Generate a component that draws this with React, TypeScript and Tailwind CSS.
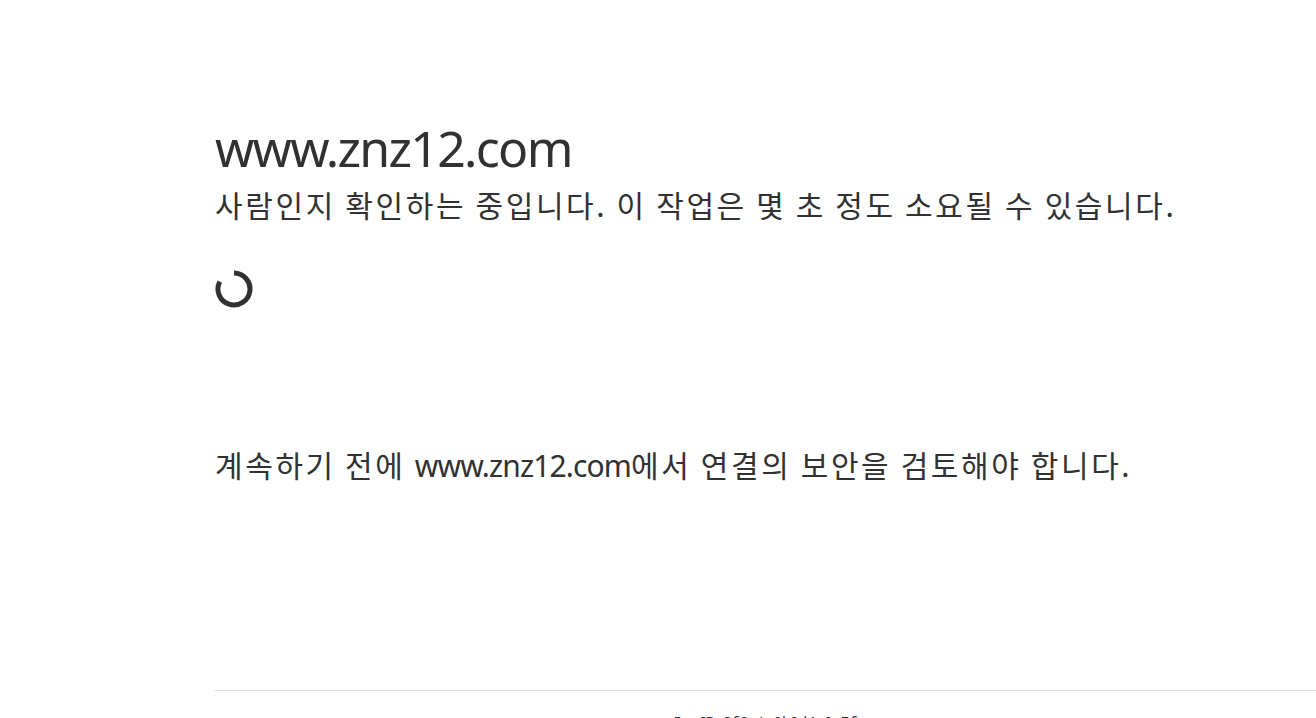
const Spinner = () => (
    <svg width="38" height="38" viewBox="0 0 38 38" fill="none">
        <path
            d="M19 3 A16 16 0 1 1 4.8 11.6"
            stroke="#313131"
            strokeWidth="5"
        />
    </svg>
)

const App = () => {
    return (
        <div className="min-h-[718px] w-full overflow-hidden bg-white text-[#313131] font-['Noto_Sans','Noto_Sans_CJK_KR',sans-serif]">
            <div className="pl-[215px] pt-[117px]">
                <h1 className="text-[50px] leading-[62px] font-normal tracking-[-1.7px]">www.znz12.com</h1>
                <h2 className="mt-[3px] text-[30px] leading-[45px] font-normal tracking-[2.62px] font-['Noto_Sans_CJK_KR',sans-serif]">
                    사람인지 확인하는 중입니다. 이 작업은 몇 초 정도 소요될 수 있습니다.
                </h2>
                <div className="mt-[43px]">
                    <Spinner />
                </div>
                <p className="mt-[134px] text-[30px] leading-[45px] tracking-[2.6px] font-['Noto_Sans_CJK_KR',sans-serif]">
                    계속하기 전에 <span className="font-['Noto_Sans',sans-serif] tracking-[-0.85px]">www.znz12.com</span>에서 연결의 보안을 검토해야 합니다.
                </p>
                <div className="mt-[202px] border-t border-[#d9d9d9] pt-[21px] text-center text-[14px] leading-[20px]">
                    Ray ID: <code className="font-['Liberation_Mono',monospace]">8f2a1c3b9d4e6a7f</code>
                </div>
            </div>
        </div>
    )
}

export default App
